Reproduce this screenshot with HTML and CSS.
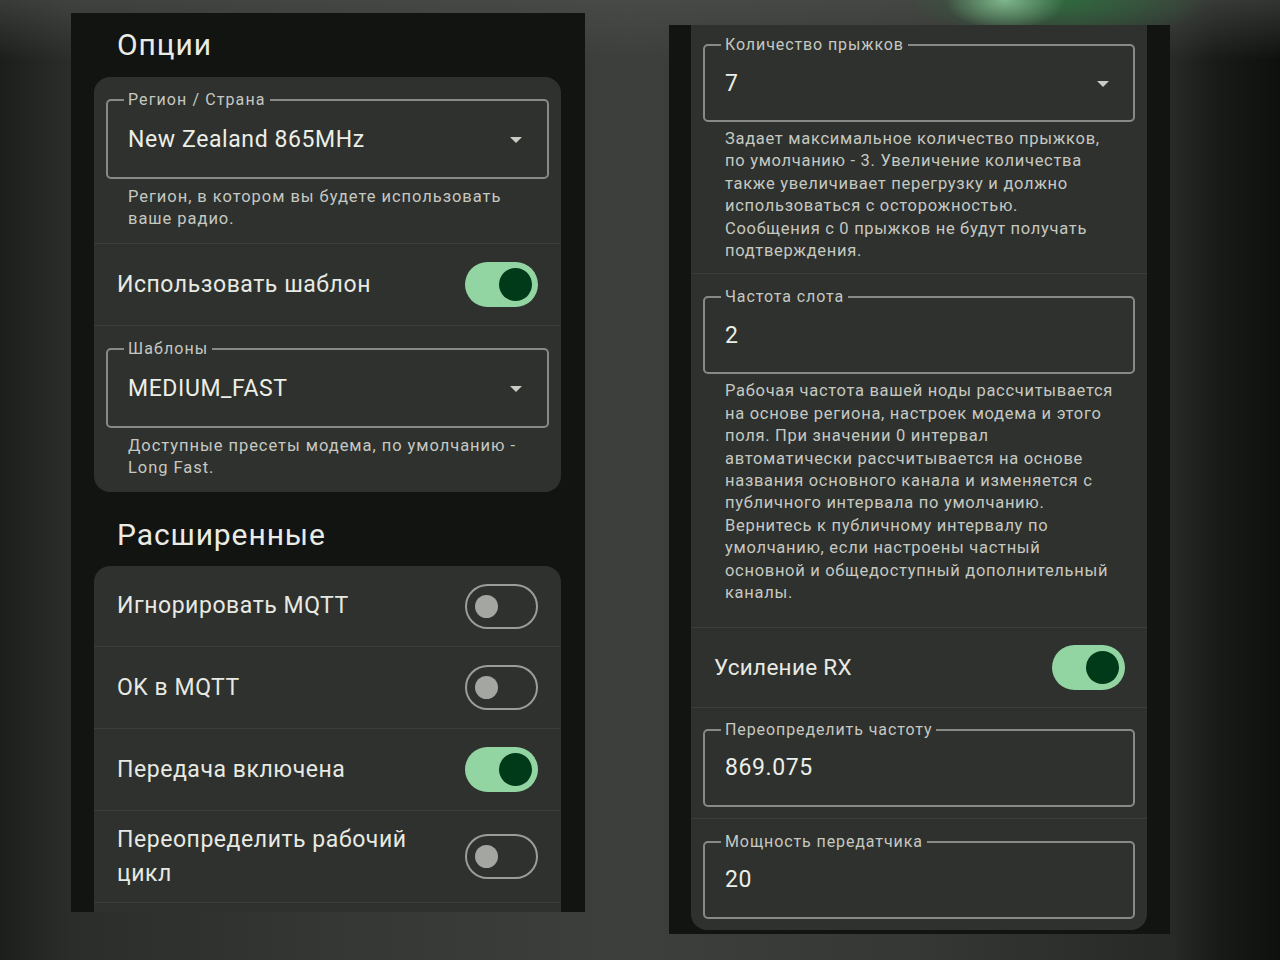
FILE: index.html
```html
<!DOCTYPE html>
<html lang="ru">
<head>
  <meta charset="UTF-8" />
  <meta name="viewport" content="width=device-width, initial-scale=1.0"/>
  <title>Настройки LoRa</title>
  <link rel="stylesheet" href="styles.css">
</head>
<body>
  <div class="stage">
    <div class="phone phone-left">
      <h2 class="section-title first">Опции</h2>
      <div class="card">
        <div class="field-block s1">
          <fieldset class="field">
            <legend>Регион / Страна</legend>
            <div class="field-value">New Zealand 865MHz<span class="arrow"></span></div>
          </fieldset>
          <div class="helper">Регион, в котором вы будете использовать<br>ваше радио.</div>
        </div>
        <div class="row">
          <span class="row-label">Использовать шаблон</span>
          <span class="switch on"><span class="thumb"></span></span>
        </div>
        <div class="field-block s2">
          <fieldset class="field">
            <legend>Шаблоны</legend>
            <div class="field-value">MEDIUM_FAST<span class="arrow"></span></div>
          </fieldset>
          <div class="helper">Доступные пресеты модема, по умолчанию -<br>Long Fast.</div>
        </div>
      </div>

      <h2 class="section-title">Расширенные</h2>
      <div class="card card-open">
        <div class="row r-first">
          <span class="row-label">Игнорировать MQTT</span>
          <span class="switch"><span class="thumb"></span></span>
        </div>
        <div class="row">
          <span class="row-label">OK в MQTT</span>
          <span class="switch"><span class="thumb"></span></span>
        </div>
        <div class="row">
          <span class="row-label">Передача включена</span>
          <span class="switch on"><span class="thumb"></span></span>
        </div>
        <div class="row r-tall">
          <span class="row-label">Переопределить рабочий<br>цикл</span>
          <span class="switch"><span class="thumb"></span></span>
        </div>
      </div>
    </div>

    <div class="phone phone-right">
      <div class="card card-bottom">
        <div class="field-block t1">
          <fieldset class="field">
            <legend>Количество прыжков</legend>
            <div class="field-value">7<span class="arrow"></span></div>
          </fieldset>
          <div class="helper">Задает максимальное количество прыжков,<br>по умолчанию - 3. Увеличение количества<br>также увеличивает перегрузку и должно<br>использоваться с осторожностью.<br>Сообщения с 0 прыжков не будут получать<br>подтверждения.</div>
        </div>
        <div class="field-block t2">
          <fieldset class="field">
            <legend>Частота слота</legend>
            <div class="field-value">2</div>
          </fieldset>
          <div class="helper">Рабочая частота вашей ноды рассчитывается<br>на основе региона, настроек модема и этого<br>поля. При значении 0 интервал<br>автоматически рассчитывается на основе<br>названия основного канала и изменяется с<br>публичного интервала по умолчанию.<br>Вернитесь к публичному интервалу по<br>умолчанию, если настроены частный<br>основной и общедоступный дополнительный<br>каналы.</div>
        </div>
        <div class="row r-rx">
          <span class="row-label">Усиление RX</span>
          <span class="switch on"><span class="thumb"></span></span>
        </div>
        <div class="field-block t3">
          <fieldset class="field">
            <legend>Переопределить частоту</legend>
            <div class="field-value">869.075</div>
          </fieldset>
        </div>
        <div class="field-block t4">
          <fieldset class="field">
            <legend>Мощность передатчика</legend>
            <div class="field-value">20</div>
          </fieldset>
        </div>
      </div>
    </div>
  </div>
</body>
</html>
```

FILE: styles.css
```css
body {
  margin: 0;
  width: 1280px;
  height: 960px;
  overflow: hidden;
  font-family: Roboto, "Noto Sans", sans-serif;
  color: #e6e7e1;
  background:
    radial-gradient(ellipse 60px 30px at 1005px 0, rgba(135, 192, 148, 0.9), rgba(135, 192, 148, 0) 100%),
    radial-gradient(ellipse 150px 42px at 1060px 0, rgba(45, 110, 62, 0.9), rgba(45, 110, 62, 0) 100%),
    linear-gradient(180deg, rgba(80, 83, 79, 0.55) 0, rgba(80, 83, 79, 0) 60px),
    linear-gradient(90deg, #1c1e1c 0, #2a2d2a 70px, #363935 400px, #3c3f3b 630px, #353834 900px, #262925 1175px, #181b18 1215px, #0d100d 1280px);
}

.stage {
  display: flex;
  align-items: flex-start;
  gap: 84px;
  padding-left: 71px;
}

.phone {
  box-sizing: border-box;
  background: #121412;
  overflow: hidden;
}

.phone-left {
  width: 514px;
  height: 899px;
  margin-top: 13px;
  padding: 0 24px 0 23px;
}

.phone-right {
  width: 501px;
  height: 909px;
  margin-top: 25px;
  padding: 0 23px 4px 22px;
}

.section-title {
  margin: 25px 0 13px;
  padding-left: 23px;
  font-size: 30px;
  line-height: 36px;
  font-weight: 400;
  letter-spacing: 0.9px;
  color: #eaebe5;
}

.section-title.first {
  margin: 14px 0 14px;
}

.card {
  background: #2e312d;
  border-radius: 16px;
}

.card-open {
  border-radius: 16px 16px 0 0;
  padding-bottom: 20px;
}

.card-bottom {
  border-radius: 0 0 16px 16px;
}

.field-block {
  padding: 14px 12px 13px;
}

.field-block + .field-block,
.field-block + .row,
.row + .field-block,
.row + .row {
  border-top: 1px solid #3a3d39;
}

.field {
  margin: 0;
  padding: 0 16px;
  border: 2px solid #878a85;
  border-radius: 5px;
  min-width: 0;
}

.field legend {
  padding: 0 4px;
  font-size: 16px;
  line-height: 18px;
  letter-spacing: 1.1px;
  color: #c6c8c2;
}

.field-value {
  box-sizing: border-box;
  height: 68px;
  padding: 0 9px 8px 4px;
  display: flex;
  align-items: center;
  justify-content: space-between;
  font-size: 23px;
  letter-spacing: 0.6px;
  color: #eceee8;
}

.arrow {
  width: 0;
  height: 0;
  border-left: 6px solid transparent;
  border-right: 6px solid transparent;
  border-top: 6px solid #c9cbc5;
  margin-top: 2px;
}

.helper {
  margin: 7px 0 0 22px;
  font-size: 16.5px;
  line-height: 22px;
  letter-spacing: 0.95px;
  color: #c6c8c2;
  white-space: nowrap;
}

.row {
  box-sizing: border-box;
  height: 82px;
  padding: 0 23px;
  display: flex;
  align-items: center;
  justify-content: space-between;
}

.row-label {
  font-size: 23px;
  line-height: 34px;
  letter-spacing: 0.55px;
  color: #e8e9e3;
}

.r-first {
  height: 80px;
}

.r-tall {
  height: 93px;
  border-bottom: 1px solid #3a3d39;
}

.switch {
  box-sizing: border-box;
  flex: none;
  width: 73px;
  height: 45px;
  border-radius: 23px;
  border: 2.5px solid #9a9d98;
  padding-left: 8px;
  display: flex;
  align-items: center;
}

.switch .thumb {
  width: 23px;
  height: 23px;
  border-radius: 50%;
  background: #a3a6a1;
}

.switch.on {
  border: none;
  background: #93d5a2;
  padding: 0 6px 0 0;
  justify-content: flex-end;
}

.switch.on .thumb {
  width: 33px;
  height: 33px;
  background: #003a19;
}

/* second screen */
.t1 {
  padding: 11px 12px 11px;
}

.t2 {
  padding: 14px 12px 22px;
}

.t3 {
  padding: 13px 12px 11px;
}

.t4 {
  padding: 14px 12px 11px;
}

.phone-right .field-value {
  height: 66px;
  padding-right: 8px;
}

.phone-right legend {
  letter-spacing: 0.9px;
}

.phone-right .helper {
  margin-top: 6px;
  line-height: 22.4px;
  letter-spacing: 0.7px;
}

.phone-right .row {
  padding: 0 22px 0 23px;
}

.phone-right .row-label {
  font-size: 22.5px;
  letter-spacing: 0.3px;
}

.r-rx {
  height: 80px;
}
```
